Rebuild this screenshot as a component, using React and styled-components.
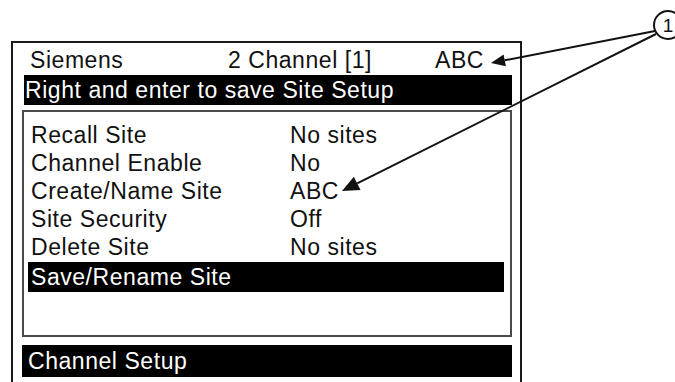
import React from "react";
import styled, { createGlobalStyle } from "styled-components";

const GlobalStyle = createGlobalStyle`
  html, body {
    margin: 0;
    padding: 0;
    overflow: hidden;
    background: #fff;
  }
  body {
    font-family: "Liberation Sans", Arial, sans-serif;
    color: #111;
  }
`;

const Page = styled.div`
  position: relative;
  width: 675px;
  height: 382px;
  box-sizing: border-box;
  padding: 41px 0 0 11px;
`;

const Screen = styled.div`
  width: 511px;
  height: 360px;
  box-sizing: border-box;
  border: 2px solid #1a1a1a;
  padding-top: 3px;
  display: flex;
  flex-direction: column;
  font-size: 23px;
  letter-spacing: 0.55px;
`;

const HeaderRow = styled.div`
  display: grid;
  grid-template-columns: 198px 207px auto;
  height: 29px;
  line-height: 28px;
  padding-left: 17px;
  white-space: nowrap;
`;

const Bar = styled.div`
  background: #000;
  color: #fff;
  height: ${p => p.h}px;
  line-height: ${p => p.h}px;
  padding-left: ${p => p.pad}px;
  margin: ${p => p.m};
  white-space: nowrap;
`;

const Panel = styled.div`
  box-sizing: border-box;
  height: 227px;
  margin: 5px 8px 0 9px;
  border: 2px solid #4a4a4a;
  padding-top: 9px;
`;

const Row = styled.div`
  display: grid;
  grid-template-columns: 259px auto;
  height: 28px;
  line-height: 28px;
  padding-left: 7px;
  white-space: nowrap;
`;

const Callouts = styled.svg`
  position: absolute;
  left: 0;
  top: 0;
  pointer-events: none;
`;

const rows = [
  ["Recall Site", "No sites"],
  ["Channel Enable", "No"],
  ["Create/Name Site", "ABC"],
  ["Site Security", "Off"],
  ["Delete Site", "No sites"],
];

// arrow head pointing at (tx,ty), line running back to (fx,fy)
const Arrow = ({ tx, ty, fx, fy, size = 16, half = 6.5 }) => {
  const dx = fx - tx;
  const dy = fy - ty;
  const len = Math.hypot(dx, dy);
  const ux = dx / len;
  const uy = dy / len;
  const bx = tx + ux * size;
  const by = ty + uy * size;
  const pts = [
    [tx, ty],
    [bx - uy * half, by + ux * half],
    [bx + uy * half, by - ux * half],
  ]
    .map(p => p.join(","))
    .join(" ");
  return (
    <g>
      <line x1={bx} y1={by} x2={fx} y2={fy} stroke="#111" strokeWidth="2" />
      <polygon points={pts} fill="#111" />
    </g>
  );
};

export default function App() {
  return (
    <Page>
      <GlobalStyle />
      <Screen>
        <HeaderRow>
          <span>Siemens</span>
          <span>2 Channel [1]</span>
          <span>ABC</span>
        </HeaderRow>
        <Bar h={30} pad={1} m="0 8px 0 11px">
          Right and enter to save Site Setup
        </Bar>
        <Panel>
          {rows.map(([label, value]) => (
            <Row key={label}>
              <span>{label}</span>
              <span>{value}</span>
            </Row>
          ))}
          <Bar h={30} pad={3} m="1px 6px 0 4px">
            Save/Rename Site
          </Bar>
        </Panel>
        <Bar h={32} pad={6} m="8px 8px 0 9px">
          Channel Setup
        </Bar>
      </Screen>
      <Callouts width="675" height="382" viewBox="0 0 675 382">
        <Arrow tx={491} ty={63} fx={655} fy={31} size={14} half={6} />
        <Arrow tx={342} ty={191} fx={656} fy={34} size={17} half={7.5} />
        <circle cx="668" cy="25" r="14" fill="#fff" stroke="#111" strokeWidth="2" />
        <text
          x="668"
          y="32"
          textAnchor="middle"
          fontFamily="Liberation Sans, Arial, sans-serif"
          fontSize="19"
          fill="#111"
        >
          1
        </text>
      </Callouts>
    </Page>
  );
}
